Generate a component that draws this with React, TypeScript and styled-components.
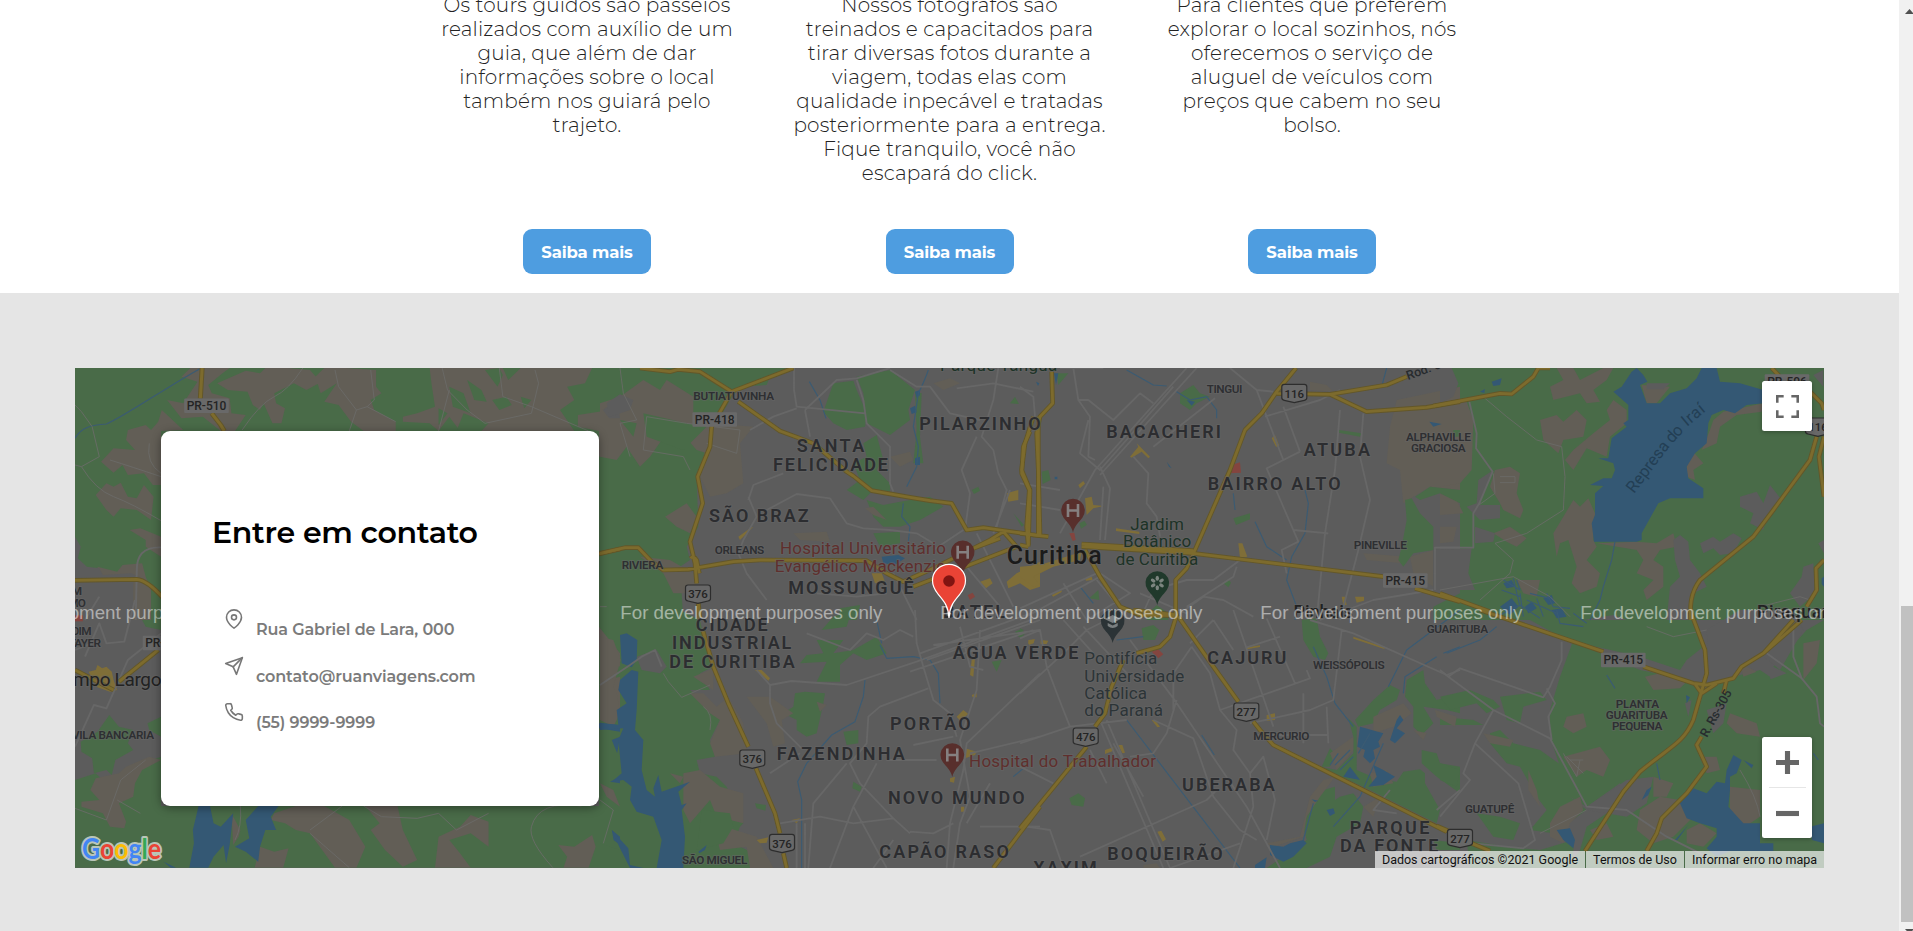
import React from "react";
import styled, { createGlobalStyle } from "styled-components";
import { FiMapPin, FiPhone, FiSend } from "react-icons/fi";

const GlobalStyle = createGlobalStyle`
  * { box-sizing: border-box; }
  html, body { margin: 0; padding: 0; overflow: hidden; background: #fff; }
  body { font-family: Montserrat, Inter, "Open Sans", sans-serif; }
`;

const Screen = styled.div`
  display: flex;
  width: 100%;
  height: 931px;
  overflow: hidden;
`;

const Page = styled.main`
  flex: 1;
  min-width: 0;
  display: flex;
  flex-direction: column;
`;

const Services = styled.section`
  flex: none;
  height: 293px;
  padding-bottom: 19px;
  display: grid;
  grid-template-columns: repeat(3, 362.5px);
  grid-template-rows: 281px;
  align-content: end;
  justify-content: center;
  overflow: hidden;
`;

const Service = styled.article`
  display: flex;
  flex-direction: column;
  align-items: center;
`;

const ServiceText = styled.p`
  margin: 0;
  color: #222;
  font-size: 20px;
  font-weight: 300;
  line-height: 24px;
  letter-spacing: 0.16px;
  text-align: center;
  white-space: pre-line;
`;

const MoreButton = styled.button`
  margin-top: auto;
  width: 128px;
  height: 45px;
  padding: 1px 0 0;
  border: 0;
  border-radius: 9px;
  background: #4e9de0;
  color: #fff;
  font-family: inherit;
  font-size: 16.5px;
  font-weight: 700;
  letter-spacing: -0.15px;
`;

const ContactSection = styled.section`
  flex: 1;
  padding: 75px 75px 0;
  background: #e5e5e5;
`;

const MapFrame = styled.div`
  position: relative;
  height: 500px;
  overflow: hidden;
  background: #5c5c5c;
`;

const MapCanvas = styled.svg`
  display: block;
  width: 1749px;
  height: 500px;
  font-family: Roboto, sans-serif;
`;

const Card = styled.div`
  position: absolute;
  left: 86px;
  top: 63px;
  width: 438px;
  height: 375px;
  padding: 83px 0 0 51px;
  border-radius: 9px;
  background: #fff;
  box-shadow: 0 2px 10px rgba(0, 0, 0, 0.4);
`;

const CardTitle = styled.h2`
  margin: 0 0 58px;
  color: #000;
  font-size: 30px;
  font-weight: 600;
  line-height: 37px;
  letter-spacing: -0.28px;
  white-space: nowrap;
`;

const ContactRow = styled.div`
  display: flex;
  gap: 12px;
  height: 46.5px;
  padding-left: 12px;
  color: #777;
`;

const ContactText = styled.span`
  margin-top: 10px;
  color: #7b7b7b;
  font-size: 16px;
  font-weight: 600;
  line-height: 22px;
  letter-spacing: -0.11px;
  white-space: nowrap;
`;

const Controls = styled.div`
  position: absolute;
  top: 13px;
  right: 12px;
  bottom: 30px;
  display: flex;
  flex-direction: column;
  justify-content: space-between;
`;

const ControlBox = styled.div`
  display: flex;
  flex-direction: column;
  align-items: center;
  width: 50px;
  border-radius: 2.5px;
  background: #fff;
  box-shadow: 0 1px 4px rgba(0, 0, 0, 0.3);
`;

const ControlButton = styled.button`
  display: grid;
  place-items: center;
  width: 50px;
  height: 50px;
  padding: 0;
  border: 0;
  background: transparent;
`;

const ControlRule = styled.div`
  width: 37px;
  height: 1px;
  background: #e6e6e6;
`;

const Attribution = styled.div`
  position: absolute;
  right: 0;
  bottom: 0;
  display: flex;
  gap: 1px;
  height: 17px;
  font-family: Roboto, sans-serif;
  font-size: 12.5px;
  line-height: 17px;
`;

const Credit = styled.span<{ $width: number }>`
  width: ${(p) => p.$width}px;
  background: rgba(245, 245, 245, 0.7);
  color: #111;
  text-align: center;
  white-space: nowrap;
`;

const Scrollbar = styled.div`
  width: 14px;
  padding: 9px 0 0 2px;
  background: #f1f1f1;
  display: flex;
  flex-direction: column;
  overflow: hidden;
`;

const Thumb = styled.div`
  width: 12px;
  height: 316px;
  margin-top: 592px;
  margin-bottom: 7px;
  background: #c1c1c1;
  flex: none;
`;

const Arrow = styled.svg`
  flex: none;
  display: block;
`;

type Sector = {
  x: number;
  y: number;
  sx: number;
  green?: string;
  tan?: string;
  park?: string;
  urban?: string;
  water?: string;
  stream?: string;
  street?: string;
  lane?: string;
  road?: string;
  amber?: string;
  red?: string;
};

const sectors: Sector[] = [
  {
    x: 60, y: 350, sx: 2.8,
    green: "M42 54H1680V780H42Z",
    tan: "M365 54H475L455 70 415 105 425 130 475 145 480 190 520 195 490 243H450L400 200 340 205 300 150 345 160 385 95 340 80ZM285 180L345 240 283 243V405L260 405 235 370 190 375 175 345 150 368 115 335 150 295 210 300 185 270 190 240 240 225 255 240 275 215ZM520 62L560 70 575 54H640L700 60 720 85 725 100 690 120 655 100 600 130 605 160 630 175 620 220 595 220 570 160 560 180 540 165 525 125 470 120 440 100ZM715 80L740 54H800L885 60 885 110 900 130 870 150 880 180 940 215V243H850L815 215 780 165 740 155 775 100 730 130ZM1035 54H1240L1255 90 1290 54H1490L1470 100 1420 110 1440 150 1400 180 1440 243H1120L1090 200 1060 243 1035 220 960 215 960 200 1000 190 1050 170 1040 100ZM1450 195L1540 180 1568 250V310L1509 320V243L1450 230ZM130 400L150 410 170 398 190 440 215 445 235 405 262 440 255 510 215 480 170 475 150 500 130 480 100 435ZM195 540L225 535 283 560V620L240 590 240 570ZM105 650L160 665 175 645 230 640 240 680 255 720V810H200V690H110Z",
    park: "M1090 110L1130 130 1150 190 1100 170ZM1190 60L1225 110 1240 75 1230 54ZM1140 90L1180 120 1195 155 1160 150ZM1210 150L1250 140 1265 165 1230 180ZM1060 175L1085 190 1060 225ZM1130 190L1200 220 1180 243H1110ZM1290 140L1320 150 1300 175Z",
    urban: "M42 560L58 590 50 625 75 650 110 655 120 675 200 670 240 690 205 692V810H42ZM1520 180L1560 150 1568 205 1538 205Z",
    stream: "M42 265C60 230 90 225 130 222C180 200 300 110 392 56",
    street: "M283 592C230 590 215 620 215 660L212 810M70 810L110 740",
    lane: "M42 165L60 185 90 230 110 320 60 350 42 345M60 350Q100 420 150 440T283 512M250 280Q240 340 283 370M140 330Q200 350 283 380M510 240Q560 160 600 140T680 54M770 60L780 110 830 180 860 170 880 150 870 60M830 180L810 243M860 170L940 215M1070 54L1085 120 1140 180 1190 220 1320 190 1340 100 1330 60M1230 54L1240 140 1320 170 1480 243M1090 120L1060 243",
    road: "M398 54L393 145M425 190L450 225 460 243M42 691L215 688C240 690 265 715 290 745M1509 612L1568 597",
  },
  {
    x: 60, y: 600, sx: 2.8,
    green: "M42 540L100 520 140 560 200 520 230 490 283 470V618H1568V803H42ZM58 425L105 395 138 345 165 380 205 390 190 430 205 450 155 480 145 525 130 510 95 520 90 475 60 455ZM245 370L283 350V410L250 390ZM215 30L283 20V90L240 80ZM1509 0H1568V618H1509Z",
    tan: "M100 535L165 520 185 500 250 470 283 480 230 510 210 550 205 590 165 610 185 665 180 685 140 680 120 640 60 620 60 605 110 600 85 570ZM480 640L505 690 500 710 485 735ZM590 660L600 640 660 618H740L810 660 855 740 830 803H770L700 700 660 690 630 670ZM855 618H945L960 690 1000 780 960 800 910 750 870 690 895 670ZM1150 645L1200 665 1200 740 1150 700 1090 720 1120 760 1150 803H1050L1060 710 1120 680ZM1395 735L1440 740 1490 705 1500 740 1480 803H1410L1420 770ZM560 740L600 755 640 745 625 803H545ZM1530 240L1568 230V350L1530 330ZM1509 80L1568 160V200L1509 150Z",
    water: "M388 618L372 690 375 730 362 803H415L430 770 458 735 465 790 475 735 485 640 450 680 430 670 420 618ZM612 618H555L520 660 530 715 490 740 520 755 555 785 560 740 575 690 605 690 590 650ZM1509 370L1568 375V395L1509 385ZM1568 410L1545 420 1560 460ZM1568 530L1540 545 1568 550ZM1545 690L1568 710V735L1550 720ZM290 785L325 803H310Z",
    street: "M42 440L95 315 130 325 190 180 283 100M70 170L110 70 130 130 180 125 210 0M42 150L90 130",
    lane: "M42 625L130 660 170 540 240 480M160 600L225 640M505 618Q510 680 490 720M850 618L900 650 1000 655 1060 640 1110 690 1200 640M700 690L790 618M700 700L810 803M1320 680Q1310 720 1380 803M1320 680Q1340 600 1460 618",
    road: "M42 210L150 270M165 245L275 150",
    amber: "M80 215L100 210 105 195 118 205 130 200 145 215 150 240 160 270 140 275 105 262Z",
    red: "M42 46H64V64H42Z",
  },
  {
    x: 600, y: 360, sx: 3,
    green: "M0 24H560L510 50 500 75 420 80 390 120 350 190 330 200 320 280 290 350 295 500 260 560 270 600 240 620 250 780H0ZM700 70L760 62 770 90 800 160 795 200 740 210 700 190 670 155ZM770 50L870 30 945 90 925 150 930 180 870 225 800 190 790 100ZM790 250L830 225 850 300 830 330 870 370V395L820 390 790 420 740 390 780 360 760 310 800 290ZM800 420L850 435 900 425 990 410 1030 440 960 480 900 500 850 500 820 470ZM945 95L965 100 960 230 970 310 940 310 950 210ZM820 520L900 515V550L840 560ZM720 745L780 735 770 780H715ZM1115 390L1135 380 1140 392 1122 402ZM1230 130L1245 110 1257 132ZM1240 460L1272 495 1265 500Z",
    tan: "M0 130L60 110 130 60 180 90 200 60 280 110 280 160 350 160 330 200 320 280 290 270 220 190 150 290 120 320 80 260 50 300 0 290ZM330 190L460 200 420 250 430 370 380 400 330 410 300 350ZM195 470L260 430 290 470 270 520 230 500ZM120 590L210 600 280 640 290 700 220 700 190 640ZM870 290L930 275 940 300 900 320ZM580 520L680 515 690 545 600 540ZM1000 70L1050 55 1080 70 1030 90ZM795 445L820 440 860 480 820 465Z",
    park: "M130 160L260 190 320 200 250 270 140 230ZM60 180L110 190 100 230Z",
    urban: "M20 130L60 103 100 120 90 150 30 170Z",
    water: "M945 95L960 90V105L950 115ZM930 145L945 137 950 157 935 162ZM845 590L895 585 915 595 885 615 850 610ZM945 295L960 290V315H945Z",
    stream: "M628 65L660 120 678 175M985 30Q975 60 955 100L940 200 955 260 950 320 920 380M910 430L905 470 930 500 925 545",
    street: "M582 24V90L590 140 795 160M450 210L520 170 590 145M615 150L630 230M615 150L710 60 770 55 870 24M770 60L790 120 800 190 870 260V370L880 395M870 30L950 80 990 80 1050 160 1140 180M1195 24L1180 120 1145 230 1180 270 1195 340 1220 390 1190 500M1130 230L1085 330 1110 400 1095 510M445 420L460 375 550 340M445 410L470 470 430 540 415 580 440 640 500 720M500 450L590 402 690 415 740 490 790 505 870 510 950 520 1000 550M1000 570L1090 510M880 640L950 780M650 700L770 710 860 700M1070 85L1180 70 1300 95M1100 620L1200 740M1130 520L1240 740M1230 390L1180 520",
    lane: "M60 24L70 100 110 180 60 190 90 290M130 270L140 170 260 190 420 210 410 280 320 250M130 270L250 290 270 330M0 740L20 740",
    road: "M120 24L210 35 235 28 300 35 395 95 580 24M395 95L335 200 330 260 293 350 308 430 270 545 285 610 290 670M295 730L300 780M415 125L540 213 600 235 640 250 740 335 760 348 815 392 930 412 990 422 1055 430 1100 510 1150 503 1320 527M0 580L75 563 115 563 155 605 190 630 265 628 400 605 480 600 800 602 860 640 910 665 1000 625 1170 540 1210 515M940 680L1250 560 1210 515M1080 580L1200 535M1300 170L1275 250 1265 330 1290 390 1285 555M1315 170V527M272 595Q280 585 290 600L298 640",
    amber: "M1220 400L1255 390V420L1225 425ZM1220 665L1250 640 1320 605V680L1290 690 1260 670 1225 685ZM1140 665L1170 655 1178 670 1158 685ZM815 640H845L855 665 825 670ZM450 505L460 500 420 540 415 530Z",
    red: "M1103 705L1118 698 1125 710 1110 720Z",
  },
  {
    x: 600, y: 610, sx: 3,
    green: "M0 0H240L300 30 320 120 340 170 300 190 330 240 270 240 330 290 380 310 360 330 330 390 345 440 290 450 300 490 350 500 380 530 410 600 430 640 420 650 400 700 460 730 450 774H0ZM615 245L675 250 670 280 650 370 620 380 590 360V330L550 310 580 290 585 250ZM650 90L730 90 700 130 760 120 830 80 860 130 800 150 760 130 720 165V215L650 215 680 155 600 160 620 135 670 130ZM665 60L700 20 755 0 740 50ZM730 365L775 360V400L740 405ZM760 515L785 530 780 545 757 535ZM1175 155L1205 150 1190 185ZM1245 65L1265 57 1275 72 1257 82ZM465 580L498 585 496 602 470 595Z",
    tan: "M0 80L40 90 62 150 40 230 50 250 60 310 40 350 0 330ZM270 250L310 250 350 290 385 260 430 340 440 430 345 440 330 400 360 330 330 310 300 280ZM250 490L300 480 360 530 430 550V640L350 620 330 570 270 640 250 600ZM340 640L470 680 520 774H450L440 710 360 720ZM440 260L510 260 580 310 545 330 555 400 520 410 500 340ZM280 200L340 175 340 240ZM0 520L40 540 60 590 20 560ZM210 490L250 500 240 520ZM650 275L680 285 660 305Z",
    park: "M305 600L390 610 400 650 370 700 290 720ZM0 700L60 720 80 774H0Z",
    urban: "M110 140L170 120 200 170 180 190 125 180Z",
    water: "M60 75L80 70 112 90 110 150 95 172 65 160ZM95 180L115 185 110 300 105 360 130 390 125 480 140 540 165 560 160 535 175 495 185 545 270 515 235 545 245 585 260 580 245 600 255 680 250 774H170L185 690 160 620 110 605 90 570 95 530 70 510 35 515 65 490 55 390 70 355 0 360V338L55 345 50 300 80 280 55 240 60 210ZM35 660L85 715 90 765 130 774H90L60 715ZM295 725L320 705 315 720 298 730Z",
    stream: "M795 210L790 260 765 335 695 375 620 460 593 515 605 570V774M840 105L860 145 940 140 990 150 1015 190 1020 280M830 30L845 100M1240 500L1270 475",
    street: "M0 225L90 165 125 140 165 120 185 170M470 180L510 225 575 213 740 225 950 155 1320 20M510 225V280L530 340 605 415M945 0L950 100 970 170 1000 270 1050 310 1070 380M960 130L1320 0M930 185L1300 60M980 150L1320 30M985 235L840 290 805 320 800 400 750 460 780 520 880 625 930 670M740 460L640 580 625 774M540 640L660 620 760 640 880 625M830 460L760 590 690 774M760 590L860 774M1320 190L1100 400 1090 480 1050 640 1040 774M1060 774L1080 640 1110 560 1080 390 1130 240 1140 60M1110 430L1320 380M860 450H1010M940 405L1060 380M510 490L600 430M620 70L750 120 800 70 850 90 900 60 940 80M930 665L1000 670 1060 640M880 690L820 774M1140 650H1320M1080 50L1110 170 1150 180M1000 105L1320 60M590 640V774M615 640V774M1170 520L1100 640",
    lane: "M190 190L205 215 245 262 330 225M310 290Q340 310 330 360M0 570L40 600 10 700",
    road: "M308 60L340 170 385 280 445 410M468 475L525 610 540 670M550 730L560 774M1180 774L1320 590",
    amber: "M1070 320L1090 300 1105 312 1080 332ZM1115 150L1125 145 1120 200 1110 195ZM1115 255L1130 250V262H1118ZM1285 95L1300 88 1302 98 1288 105ZM470 690L505 682 500 698 480 700ZM465 180L485 180 510 205 505 212ZM1095 415L1130 425 1125 435 1095 445ZM1050 505L1065 500 1062 518 1050 515ZM1083 590H1093V605H1083ZM575 630L600 625 590 640Z",
  },
  {
    x: 1020, y: 360, sx: 3,
    green: "M1290 24H1320V100L1300 90ZM480 100L520 75 540 100 570 110 530 130 510 150 480 130ZM640 475L690 460V478L648 495ZM957 210L1025 220 1020 230 957 218ZM65 335L85 330 92 360 68 372ZM380 765L410 735 445 760V780H380ZM208 715L235 690 238 720ZM610 670L625 658 633 668 625 682ZM178 490L193 482 201 494 183 506ZM110 40L145 40 115 75Z",
    tan: "M1130 120L1320 80V390L1230 380 1180 410 1150 430 1140 330 1100 310 1110 200ZM1030 580L1160 590 1150 610 1040 600ZM870 65L920 75 940 95 870 90ZM1170 590L1240 570V680L1180 640Z",
    park: "M1185 410L1230 380 1320 390V430L1260 400 1200 420ZM1155 420L1175 415 1200 460 1240 500V570L1180 580 1150 620 1135 600 1145 560 1160 480ZM1300 210H1320V230H1300Z",
    water: "M500 120L525 125 515 137ZM1228 185L1265 192 1240 200ZM102 40H115L108 75ZM440 305L455 325 447 320ZM104 350H112V358H104ZM48 65L58 70 54 78Z",
    stream: "M320 30L400 75 440 78M465 92L510 120 560 110 590 150V175M640 400L645 450M855 390L865 430 855 520 815 590 800 660 830 740 825 780M705 485L740 560 800 600M1100 24L1085 80M180 680L220 730",
    street: "M160 24L175 120 210 170 205 290 225 300M175 120L205 120 280 180 360 100 400 130M460 80L240 330 180 280 205 180M500 24L225 330 120 520M530 24L240 345M400 260L585 115M240 320L270 385 255 540M250 380L240 540M340 290L385 340 380 430 410 470 420 530M960 150L945 330 915 520 890 780M1030 160L1020 290 1050 420 1015 570 960 780M710 90L740 170 790 300M840 275L740 325 835 545 785 570 800 640M790 140L840 275M630 24L710 90 760 95M735 170L900 120 960 90M820 510L925 520M360 780L400 690 500 660 580 660 660 600M650 620L640 650 500 740M200 780L330 700 240 640M0 780L240 650M0 745L230 640M0 430L120 450M0 370L120 390M480 760L550 710 610 720 700 770M900 780L1060 720 1240 690M1320 563H1245V690M0 80L40 110 45 170M120 24L250 24M360 700L500 760M130 670L200 780M230 660L330 780",
    road: "M95 35L98 130 60 170 50 220 55 330 60 525M30 215L10 260 5 340 28 390 20 500 25 560M828 24L770 95 725 160 675 210 630 330 525 570 500 625 467 660V780M770 100L930 103 1100 75 1160 50M930 103L1040 155 1220 142 1320 125M0 520L85 530M0 555L25 560M185 560L520 580 1090 650M185 552L520 572M1185 685L1320 725M195 570L240 650 300 740 360 765 470 767",
    amber: "M0 620L60 615 185 575 180 600 100 620 40 650 60 675 40 680 0 650ZM195 415L215 410 220 435 252 438 220 445 200 465ZM330 290L355 260 350 250 390 290 385 295 365 275 335 293ZM175 375L190 363 195 371 180 385ZM288 505L358 515 358 522 288 513ZM655 550H667L682 590 660 593ZM755 235L765 225 778 258 768 260ZM1005 710H1032V722L1010 728ZM965 710H975L980 735H970ZM95 705L125 690V696L100 710ZM195 655L215 650 218 660 198 662Z",
    red: "M635 315L660 307 663 338 625 340ZM148 520L163 518 167 540 158 543Z",
  },
  {
    x: 1020, y: 610, sx: 3,
    green: "M845 30L890 25 900 80 925 130 915 150 880 140 850 90ZM1160 210L1210 180 1215 220 1250 270 1320 250V310L1280 300 1210 290 1240 340 1205 375 1180 350V290L1155 260ZM1005 330L1060 270 1110 225 1140 240 1130 270 1080 300 1060 340 1015 350ZM985 325L1010 350V480L1080 510 1130 515 1150 485 1200 478 1215 490V520L1260 600 1250 640 1150 590 1050 540 900 470 950 480 1000 430V380ZM1205 420L1250 430 1260 460 1320 470V550L1250 500 1205 460ZM905 470L930 415 945 430 930 470ZM910 540L945 530V570L960 560 1000 550 1030 590 1020 640 950 680 930 740 860 774H740L860 690 850 650 870 590ZM365 55L400 45 418 60 405 90 370 90ZM148 565L175 550 195 565 190 590 155 585ZM0 55L10 60V80L0 85ZM1240 690L1320 700V720H1250Z",
    tan: "M1060 320L1150 280 1175 310 1120 350 1060 370ZM930 430L1000 380V420L950 480ZM910 510L945 500 900 560 860 620 850 680 760 710 740 700 840 680 870 560ZM1050 490L1100 480 1120 520 1060 530ZM1030 590L1080 560 1060 620ZM1180 360L1220 370 1210 390ZM1245 300L1310 320 1305 350 1250 320ZM370 765L410 760 420 774H370Z",
    water: "M1020 350L1090 370 1075 395 1080 410 1060 420 1065 445 1050 460 1030 440 1035 420 1012 410ZM1110 390L1130 330 1140 315 1150 330 1130 355 1155 370 1125 400ZM1060 465L1090 480 1125 500 1090 525 1045 530 1070 500ZM750 705L790 710 810 700 850 690 860 700 820 740 790 755 750 735ZM705 765L740 742 735 774H705ZM920 600L940 595 945 610 930 618ZM970 500L990 470 1020 510ZM875 568L895 572 885 576Z",
    stream: "M320 330L660 774M545 375L583 435M880 110L920 200 945 280 1000 350M1320 0L1240 60 1160 120 1105 230M1150 250L1155 200 1250 140M1090 400L1020 560 940 650M290 90L370 80M930 465L955 430M945 465L990 420M960 480L1000 440M1015 430L1050 370M1320 110L1270 130M850 690L880 580",
    street: "M0 250L130 130 200 60 320 0M80 170L130 300 150 350M0 400L150 350 320 330M330 90L460 265 680 590 780 774M470 270L440 370 400 430 330 440M400 330L520 385 580 560 660 660 710 690M515 110L460 190V300M515 110L570 190 600 300 650 360 640 420 690 490 730 440 765 570 740 690M600 300L870 205 860 180M740 25L825 220M640 0L760 350M690 490L700 590 640 774M690 340L870 300 940 270 965 60M920 290L925 400M710 375H925M870 30L1000 70 1280 195 1320 180M240 330L430 774M260 330L450 774M280 400L370 560M210 420L260 520M180 740L560 570 590 540M20 650L90 660 130 774M0 470L100 520M1130 610L1060 600 1110 540M680 112L780 80M510 100L580 30M580 30L640 120M130 30L220 130M0 85L60 60 80 170M190 50L330 200M1250 600L1320 540M450 774L660 700M850 250V400",
    road: "M0 655L200 410M225 350L255 310 275 230 310 150M340 0L470 15 450 80 420 110 350 130M475 20L580 170 655 275M700 335L720 360 760 405 900 475 1280 665",
    amber: "M395 330H405L420 350 412 352ZM255 420L280 412V422L255 432ZM295 405H307L315 428 307 430ZM740 315L765 310V330L740 333ZM1000 80L1090 110 1095 118 1000 86ZM412 665L424 662 438 688 428 695ZM680 112L720 106V111L680 118ZM25 90L45 88 40 100 25 103ZM62 90L85 92 80 102 62 102Z",
    red: "M395 125L415 118 430 133 415 145Z",
  },
  {
    x: 1440, y: 360, sx: 3,
    green: "M20 24H1152V780H-20V740L60 700 60 300 0 400V90Z",
    tan: "M0 130L80 125 100 180 95 330 60 370 0 380ZM330 80L370 60 350 24H400L420 60 490 24H520L500 60 460 90 480 125 440 130 420 100 340 120ZM300 180L350 165 370 185 410 150 440 180 430 230 370 240 355 280 310 240ZM520 120L560 150V190L510 230 500 290 440 265 400 330 375 300 400 270 460 220 510 180 500 150ZM400 420L420 440 445 415 465 460 460 540 470 560 440 600 480 640 470 680 420 700 395 670 410 620 385 540 360 550 350 590 340 520 370 470ZM165 330L210 320 240 340 230 400 250 450 240 475 190 450 180 430 150 380ZM0 400L50 420 70 460 0 465ZM0 500L50 500 40 545 0 550ZM160 520L210 500 260 535 230 560 200 545ZM470 550L590 545 650 550 700 520 710 560 660 570 640 600 670 620V680L620 720 610 690 640 660 590 640 610 600 590 570ZM605 75L690 80 650 130 620 130ZM820 180L850 155 970 130 965 155 890 165 840 200 830 250 785 270 810 210ZM755 270L790 310 760 330 765 360 740 350V310ZM230 660L300 660 290 710 250 700Z",
    urban: "M0 24H35L55 70 40 110 0 130ZM700 540L720 525 745 545 750 600 780 640 800 680 760 700 750 780H680L690 680 720 650 705 600ZM900 410L950 395 970 430 990 375 1025 420 980 470 970 510 930 490 940 460 900 440ZM780 550L820 530 840 545 880 520 905 535 880 580 840 585 820 565 790 580ZM1090 620L1120 610 1125 700 1080 740 1050 700 1085 650ZM-20 570L95 565 85 640 105 690 -20 690ZM115 360L160 330 130 400 120 435 180 435V475L120 480 80 440 110 430ZM105 500L165 520 160 545 105 550ZM620 70H690L670 88H620ZM1120 45L1150 30V80ZM1135 550L1152 540V580ZM430 780L520 765 560 780Z",
    water: "M575 35L590 24 610 45 622 65 600 75 620 130 660 130 690 100 740 85 770 55 785 24H830L840 65 900 70 970 90V130L920 135 885 160 850 150 815 165 805 190 800 250 765 280 740 320 745 355 790 385V415L690 415 655 430 630 475 605 520V540L590 545H462L455 490 465 465V400L490 378 450 375 490 355 515 355 525 330 520 310 475 295 505 295 515 235 560 200 550 190 565 180 565 135 520 95 545 80ZM155 65L185 55 180 75 160 78ZM120 95L135 87 133 99ZM1145 655L1152 650V680L1145 672ZM180 740L215 715 235 740 210 765ZM255 740L275 725 290 745 265 760ZM310 715L335 705 345 730 325 735ZM335 750L365 745 380 770 350 775ZM190 670L215 660 225 680 200 685Z",
    stream: "M525 545L515 600 490 680 480 720 450 780M190 660L240 690 230 660M185 690L240 710M220 655L240 740M320 700L340 740 390 745M260 720L350 760M240 700L250 770M170 770L240 735 300 775M290 715L310 770M270 700L330 715",
    street: "M88 125L110 220 108 265 158 335 118 430 100 460V563H0",
    lane: "M135 115L200 170 290 240 365 260 375 350 370 450 260 520 165 550 220 600 210 640 120 720M0 690L220 650 330 710 390 770M160 340L165 400 110 440M180 350H225V368H180M960 740L1080 710 1110 720",
    road: "M-20 138L180 100 215 102 280 50 295 24H330M995 24L1020 50M1110 95L1145 130 1152 150M1130 230L1110 300 1000 450 940 530 780 660C750 700 750 740 752 780M1152 230L1137 290 1152 410M1152 600L1128 625 1130 690 1100 740M0 700L150 755",
  },
  {
    x: 1440, y: 610, sx: 3,
    green: "M120 0H740L780 60 790 110 740 150 720 180 600 140 380 90 270 30ZM400 90L480 130 600 180 700 200 790 240 880 200 960 180 990 200 1000 260 1070 230 1152 300V774H380L420 720 440 650 500 610 560 560 540 520 440 590 390 560 330 380V300L360 200ZM1100 60L1152 30V300L1120 330 1060 280 950 250 960 220 1040 190 1000 170ZM0 260L90 240 160 270 180 290 140 310 110 280 30 300ZM180 260L300 245 320 270 250 290 240 340 200 330ZM0 320L100 330 130 345 0 345ZM150 370L180 360 220 400 300 420 370 470 390 560 440 600 340 670 270 660 320 600 290 560 240 470 200 460 150 400ZM0 460L60 480 50 530 0 510ZM110 610L180 620 240 640 220 690 160 680ZM80 690L200 710 300 720 400 690V774H90Z",
    tan: "M615 200L660 190 740 215 720 235 640 240ZM130 370L220 390 210 410 150 400ZM370 440L480 410 510 450 490 500 440 480 410 500ZM380 320L430 310 440 350 400 370 370 350ZM265 480L290 540 300 590 265 540ZM870 310L950 340 960 380 890 370 860 340ZM600 600L660 560 720 570 760 620 700 680 640 700 590 660ZM330 640L360 590 420 560 430 600 390 640 370 700 330 680ZM450 660L500 640 520 680 470 690ZM870 530L960 540V620L900 660 870 600ZM740 660L780 640 830 670 790 710 740 700ZM1090 100L1140 90 1130 160 1090 210ZM900 160L950 185 910 200ZM780 440L830 440 840 480 800 490ZM640 500L700 520 680 560 640 560Z",
    urban: "M440 590L560 510 640 500 620 580 560 620 440 600ZM800 60L900 0H1060L1090 60 1020 180 960 130 880 200 810 200ZM800 300L860 280 850 340 820 370ZM735 280L755 270 745 320Z",
    water: "M720 580L760 535 800 550 830 515 855 520 860 480 880 435 905 450 890 490 870 500V540L865 590 910 640 960 640V700H1000V723H870L830 740 800 715 830 680V655L780 640 740 625ZM1110 650L1152 640V700L1116 690ZM350 660L390 655 405 690 400 715 370 690ZM605 570L620 540 635 530 625 555ZM910 450L940 465 935 475ZM738 255L750 262 740 280ZM705 690L745 645 712 690Z",
    stream: "M20 130L120 90 170 50M350 0L360 40 430 50M400 10L440 40M500 195L525 235M1120 430L1135 450M650 460L660 510",
    street: "M0 180L25 200 60 175 310 262 330 230 365 150V95M25 200L160 300 330 385 440 590 560 600 680 680 800 740M160 300L105 400 235 520 285 690 250 715 100 700M105 400L70 490 90 510 0 620M320 235L345 280 325 320 335 390M980 130L1085 205 1130 260 1140 340 1152 350M1060 60V140L1085 205",
    lane: "M370 430L410 500 420 450M380 440L430 490M390 450H430M900 480Q950 560 960 620M620 50L700 80 800 60M300 670L440 600",
    road: "M120 0L490 125M610 170L760 220 800 225 880 205 905 170 970 130 1085 30M750 0L795 120 800 190 760 330C730 400 690 410 600 485L550 545 435 723M970 130L1060 30M765 222L785 250 830 220M860 210L850 250M785 380L770 405 800 470 740 550 665 625 650 670 620 723M-10 648L30 665M95 700L150 723",
  },
];

type Label = [text: string, x1: number, x2: number, y: number];

const districts: Label[] = [
  ["SANTA", 796.7, 864.3, 451.7], ["FELICIDADE", 773, 888, 470.5], ["PILARZINHO", 919.3, 1040.7, 429.7],
  ["SÃO BRAZ", 709, 808.7, 522], ["MOSSUNGUÊ", 788.3, 913.7, 593.7], ["BATEL", 943, 1005, 617.5],
  ["CIDADE", 695.7, 767.7, 630.7], ["INDUSTRIAL", 672, 791.3, 649.3], ["DE CURITIBA", 669.3, 794.7, 668],
  ["ÁGUA VERDE", 952.7, 1078.3, 658.7], ["PORTÃO", 890, 970.7, 730.3], ["FAZENDINHA", 776.7, 904.7, 759.7],
  ["NOVO MUNDO", 888, 1024.7, 803.7], ["CAPÃO RASO", 879.3, 1009, 857.7], ["XAXIM", 1033.3, 1096.7, 874],
  ["BOQUEIRÃO", 1107.3, 1222.7, 860.3], ["UBERABA", 1182, 1274.7, 791.3], ["CAJURU", 1207.3, 1286.3, 663.7],
  ["PARQUE", 1349.7, 1429.3, 833.7], ["DA FONTE", 1340, 1438.3, 852.3], ["BACACHERI", 1106.3, 1221, 437.7],
  ["ATUBA", 1303.7, 1370, 455.7], ["BAIRRO ALTO", 1207.7, 1340.7, 490.3],
];

const hamlets: Label[] = [
  ["BUTIATUVINHA", 693.3, 774, 400], ["ORLEANS", 714.7, 764.3, 554], ["RIVIERA", 621.7, 663.3, 569.3],
  ["SÃO MIGUEL", 682, 747.3, 864], ["MERCURIO", 1253.3, 1309.3, 740.3], ["WEISSÓPOLIS", 1313, 1384.7, 669],
  ["TINGUI", 1206.7, 1242.3, 393], ["ALPHAVILLE", 1406, 1471, 441], ["GRACIOSA", 1411, 1465.7, 452.3],
  ["PINEVILLE", 1353.7, 1407, 549], ["GUARITUBA", 1426.7, 1488, 632.7], ["PLANTA", 1615.7, 1659, 707.7],
  ["GUARITUBA", 1605.7, 1667.7, 719], ["PEQUENA", 1612, 1662.3, 730.3], ["GUATUPÊ", 1465, 1514.3, 812.7],
  ["BOM", 57, 82, 595], ["JERÔNIMO", 33, 86, 606.5], ["JARDIM", 52, 91.6, 635.3], ["SCHAFFAYER", 35, 101, 646.5],
  ["VILA BANCARIA", 72, 154, 739.3],
];

const hospitals: Label[] = [
  ["Hospital Universitário", 780, 946, 554.3], ["Evangélico Mackenzie", 774.7, 945.3, 571.7],
  ["Hospital do Trabalhador", 969, 1156, 766.7],
];

const gardens: Label[] = [
  ["Parque Tanguá", 940, 1057.3, 370.5], ["Jardim", 1130.3, 1184, 530], ["Botânico", 1123, 1191.3, 547.3],
  ["de Curitiba", 1115.7, 1198.3, 564.7],
];

const university: Label[] = [
  ["Pontifícia", 1084.3, 1157.3, 664], ["Universidade", 1084.3, 1184.3, 681.7], ["Católica", 1084.3, 1147, 699],
  ["do Paraná", 1084.3, 1163, 716.3],
];

const towns: Label[] = [
  ["Pinhais", 1293.5, 1353, 618], ["Piraquara", 1757, 1838, 618],
];

const LabelSet = ({ items, size, weight, fill }: { items: Label[]; size: number; weight: number; fill: string }) => (
  <g fontSize={size} fontWeight={weight} fill={fill} stroke="#666" strokeWidth={2} strokeOpacity={0.5} strokeLinejoin="round" paintOrder="stroke">
    {items.map(([text, x1, x2, y]) => (
      <text key={text + y} x={x1} y={y} textLength={x2 - x1}>{text}</text>
    ))}
  </g>
);

const plates: [string, number, number][] = [
  ["PR-510", 206.5, 405.8], ["PR-418", 714.7, 419.5], ["PR-415", 1405.3, 580.5], ["PR-415", 1623.3, 660],
  ["PR-506", 1787, 381.5], ["PR-423", 165, 643],
];

const shields: [string, number, number][] = [
  ["376", 698, 594], ["376", 752.3, 759], ["376", 782, 843.3], ["116", 1294.3, 393.3], ["476", 1085.7, 737],
  ["277", 1246.3, 712], ["277", 1460, 838.3], ["116", 1818, 427],
];

const Poi = ({ x, y, fill, children }: { x: number; y: number; fill: string; children?: React.ReactNode }) => (
  <g transform={`translate(${x} ${y})`}>
    <path d="M0 22C-1.5 15-6 12-9.5 7A11.8 11.8 0 1 1 9.5 7C6 12 1.5 15 0 22Z" fill={fill} />
    {children}
  </g>
);

const HospitalMark = () => <path d="M-5-6.5V6.5M5-6.5V6.5M-5 0H5" stroke="#858080" strokeWidth={2.6} fill="none" />;

type Layer = { key: keyof Sector; fill?: string; stroke?: string; width?: number };

const layers: Layer[] = [
  { key: "green", fill: "#496b48" },
  { key: "tan", fill: "#625e56" },
  { key: "park", fill: "#496b48" },
  { key: "urban", fill: "#5c5c5c" },
  { key: "water", fill: "#345874" },
  { key: "amber", fill: "#7f6e38" },
  { key: "red", fill: "#84453f" },
  { key: "stream", stroke: "#3b5b73", width: 3.5 },
  { key: "lane", stroke: "#6b6b69", width: 2.5 },
  { key: "street", stroke: "#676767", width: 5.5 },
  { key: "road", stroke: "#635729", width: 14 },
  { key: "road", stroke: "#7d6b2d", width: 8.5 },
];

const CityMap = () => (
  <MapCanvas viewBox="75 368 1749 500">
    <rect x="75" y="368" width="1749" height="500" fill="#5c5c5c" />
    {layers.map((layer, i) => (
      <g key={i} fill={layer.fill ?? "none"} stroke={layer.stroke} strokeWidth={layer.width} strokeLinejoin="round">
        {sectors.map((s, j) => s[layer.key] && (
          <path key={j} d={s[layer.key] as string} transform={`translate(${s.x} ${s.y}) scale(${1 / s.sx} ${1 / 3})`} />
        ))}
      </g>
    ))}

    {plates.map(([text, x, y], i) => (
      <g key={i}>
        <rect x={x - 22.3} y={y - 7.3} width={44.6} height={14.6} rx={1} fill="#696969" />
        <text x={x} y={y + 4.2} fontSize={12} fontWeight={500} fill="#242424" textAnchor="middle">{text}</text>
      </g>
    ))}
    {shields.map(([text, x, y], i) => (
      <g key={i} transform={`translate(${x} ${y})`}>
        <path d="M-10-9H10Q12.500-9 12.500-6.500V4.500Q12.500 6.500 10 7L0 9.300-10 7Q-12.500 6.500-12.500 4.500V-6.500Q-12.500-9-10-9Z" fill="#686868" stroke="#2d2d2d" strokeWidth={1.2} />
        <text y={4.2} fontSize={11.5} fontWeight={500} fill="#242424" textAnchor="middle">{text}</text>
      </g>
    ))}

    <LabelSet items={districts} size={18} weight={600} fill="#2c2d30" />
    <LabelSet items={hamlets} size={11.8} weight={600} fill="#2e2f32" />
    <LabelSet items={hospitals} size={17} weight={400} fill="#5f2f2d" />
    <LabelSet items={gardens} size={17} weight={400} fill="#1d3327" />
    <LabelSet items={university} size={17} weight={400} fill="#2c3437" />
    <LabelSet items={towns} size={18} weight={500} fill="#222" />
    <LabelSet items={[["Curitiba", 1006.7, 1101.7, 563.7]]} size={25} weight={500} fill="#1b1b1b" />
    <LabelSet items={[["Campo Largo", 51, 161.5, 686]]} size={19} weight={400} fill="#222" />
    <g fill="#272b2e">
      <text transform="translate(1634 494) rotate(-53)" fontSize={16.5} textLength={60} fill="#233f55">Represa</text>
      <text transform="translate(1672 444) rotate(-47)" fontSize={16.5} textLength={18} fill="#233f55">do</text>
      <text transform="translate(1687 427) rotate(-40)" fontSize={16.5} textLength={25} fill="#233f55">Iraí</text>
      <text transform="translate(1707 738) rotate(-61)" fontSize={12.5} fontWeight={500} textLength={52}>R. Rs-305</text>
      <text transform="translate(1408 380) rotate(-20)" fontSize={12.5} fontWeight={500}>Rod. Contorno</text>
    </g>

    <Poi x={962.7} y={552.3} fill="#582f2c"><HospitalMark /></Poi>
    <Poi x={952.3} y={755} fill="#582f2c"><HospitalMark /></Poi>
    <Poi x={1073} y={510.5} fill="#582f2c"><HospitalMark /></Poi>
    <Poi x={1157.3} y={583} fill="#20392b">
      {[0, 60, 120, 180, 240, 300].map((a) => (
        <ellipse key={a} cy={-4.8} rx={1.7} ry={2.5} fill="#7c857f" transform={`rotate(${a})`} />
      ))}
    </Poi>
    <Poi x={1112.7} y={621} fill="#2b3336">
      <path d="M-8-2L0-6 8-2 0 2ZM-5 2V5Q0 9 5 5V2L0 4.500Z" fill="#7a7f80" />
    </Poi>

    <g fill="#fff" fillOpacity={0.5} fontFamily="'Liberation Sans', Arial, sans-serif" fontSize={18.75}>
      {[-19.7, 300.3, 620.3, 940.3, 1260.3, 1580.3].slice(1).map((x) => (
        <text key={x} x={x === 300.3 ? -19.7 : x} y={619.3} textLength={262}>For development purposes only</text>
      ))}
    </g>

    <path d="M949 618C948.300 606 944 601 938 594C934 589 932.500 586 932.500 580.500A16.500 16.200 0 0 1 965.500 580.500C965.500 586 964 589 960 594C954 601 949.700 606 949 618Z" fill="#ea4335" stroke="#fff" strokeWidth={1.2} />
    <circle cx={949} cy={581} r={5.8} fill="#811411" />

    <text x={82} y={859} fontFamily="Lato, sans-serif" fontSize={28} fontWeight={700} textLength={79} lengthAdjust="spacingAndGlyphs" stroke="#b9c5b8" strokeWidth={4} strokeLinejoin="round" paintOrder="stroke">
      <tspan fill="#4285f4">G</tspan><tspan fill="#ea4335">o</tspan><tspan fill="#fbbc04">o</tspan><tspan fill="#4285f4">g</tspan><tspan fill="#34a853">l</tspan><tspan fill="#ea4335">e</tspan>
    </text>
  </MapCanvas>
);

const services = [
  "Os tours guidos são passeios\nrealizados com auxílio de um\nguia, que além de dar\ninformações sobre o local\ntambém nos guiará pelo\ntrajeto.",
  "Nossos fotógrafos são\ntreinados e capacitados para\ntirar diversas fotos durante a\nviagem, todas elas com\nqualidade inpecável e tratadas\nposteriormente para a entrega.\nFique tranquilo, você não\nescapará do click.",
  "Para clientes que preferem\nexplorar o local sozinhos, nós\noferecemos o serviço de\naluguel de veículos com\npreços que cabem no seu\nbolso.",
];

const contacts = [
  { icon: FiMapPin, text: "Rua Gabriel de Lara, 000" },
  { icon: FiSend, text: "contato@ruanviagens.com" },
  { icon: FiPhone, text: "(55) 9999-9999" },
];

export default function App() {
  return (
    <Screen>
      <GlobalStyle />
      <Page>
        <Services>
          {services.map((text) => (
            <Service key={text}>
              <ServiceText>{text}</ServiceText>
              <MoreButton>Saiba mais</MoreButton>
            </Service>
          ))}
        </Services>
        <ContactSection>
          <MapFrame>
            <CityMap />
            <Card>
              <CardTitle>Entre em contato</CardTitle>
              {contacts.map(({ icon: Icon, text }) => (
                <ContactRow key={text}>
                  <Icon size={20} strokeWidth={1.9} />
                  <ContactText>{text}</ContactText>
                </ContactRow>
              ))}
            </Card>
            <Controls>
              <ControlBox>
                <ControlButton aria-label="Tela cheia">
                  <svg width="23" height="23" viewBox="0 0 18 18" fill="#666">
                    <path d="M0 0v6h2V2h4V0H0zm16 0h-4v2h4v4h2V0h-2zm0 16h-4v2h6v-6h-2v4zM2 12H0v6h6v-2H2v-4z" />
                  </svg>
                </ControlButton>
              </ControlBox>
              <ControlBox>
                <ControlButton aria-label="Aumentar">
                  <svg width="23" height="23" viewBox="0 0 18 18" fill="#666">
                    <path d="M18 7h-7V0H7v7H0v4h7v7h4v-7h7z" />
                  </svg>
                </ControlButton>
                <ControlRule />
                <ControlButton aria-label="Diminuir">
                  <svg width="23" height="23" viewBox="0 0 18 18" fill="#666">
                    <path d="M0 7h18v4H0z" />
                  </svg>
                </ControlButton>
              </ControlBox>
            </Controls>
            <Attribution>
              <Credit $width={210}>Dados cartográficos ©2021 Google</Credit>
              <Credit $width={98}>Termos de Uso</Credit>
              <Credit $width={139}>Informar erro no mapa</Credit>
            </Attribution>
          </MapFrame>
        </ContactSection>
      </Page>
      <Scrollbar>
        <Arrow width="12" height="5" viewBox="0 0 12 5"><path d="M4 5L8.500 0 13 5Z" fill="#505050" /></Arrow>
        <Thumb />
        <Arrow width="12" height="5" viewBox="0 0 12 5"><path d="M4 0H13L8.500 5Z" fill="#505050" /></Arrow>
      </Scrollbar>
    </Screen>
  );
}
